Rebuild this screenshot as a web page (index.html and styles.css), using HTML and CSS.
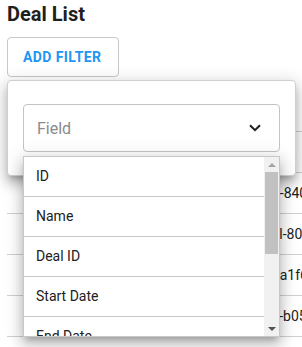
FILE: index.html
```html
<!DOCTYPE html>
<html lang="en">
<head>
    <meta charset="UTF-8">
    <meta name="viewport" content="width=device-width, initial-scale=1.0">
    <title>Deal List</title>
    <link rel="stylesheet" href="styles.css">
</head>
<body>
    <div class="page">
        <h1 class="title">Deal List</h1>
        <button class="add-filter">ADD FILTER</button>

        <table class="deals">
            <colgroup>
                <col class="col-name">
                <col class="col-id">
            </colgroup>
            <thead>
                <tr><th>Name</th><th>ID</th></tr>
            </thead>
            <tbody>
                <tr><td>Acme renewal</td><td>N/A</td></tr>
                <tr><td>Globex expansion</td><td>d7-840c2e91</td></tr>
                <tr><td>Initech pilot</td><td>5el-80b3f0c2</td></tr>
                <tr><td>Umbrella upsell</td><td>b2a1f6e0</td></tr>
                <tr><td>Hooli onboarding</td><td>4c-b05d71a8</td></tr>
            </tbody>
        </table>

        <!-- filter popover -->
        <div class="filter-popover">
            <div class="field-select">
                <span class="placeholder">Field</span>
                <svg class="chevron" width="12" height="8" viewBox="0 0 12 8">
                    <path d="M1 1.2l5 5 5-5" fill="none" stroke="#1f1f1f" stroke-width="2"/>
                </svg>
            </div>
        </div>

        <div class="field-menu">
            <ul class="menu-list">
                <li>ID</li>
                <li>Name</li>
                <li>Deal ID</li>
                <li>Start Date</li>
                <li>End Date</li>
                <li>Status</li>
                <li>Amount</li>
                <li>Created At</li>
            </ul>
            <div class="scrollbar">
                <span class="arrow up"></span>
                <span class="thumb"></span>
                <span class="track"></span>
                <span class="arrow down"></span>
            </div>
        </div>
    </div>
</body>
</html>
```

FILE: styles.css
```css
html, body {
    margin: 0;
    background: #fff;
    overflow: hidden;
}
body {
    font-family: Roboto, "Liberation Sans", sans-serif;
    color: #212121;
}
.page {
    position: relative;
    padding: 2px 7px 0;
    height: 345px;
}
.title {
    margin: 0;
    font-size: 20px;
    line-height: 24px;
    font-weight: 700;
    color: #1f1f1f;
}
.add-filter {
    display: block;
    margin-top: 11px;
    height: 40px;
    padding: 0 17px 0 15px;
    background: #fff;
    border: 1px solid #c8c8c8;
    border-radius: 4px;
    font-family: Roboto, sans-serif;
    font-size: 14px;
    font-weight: 700;
    letter-spacing: 0.4px;
    color: #2196f3;
}
.deals {
    margin-top: 8px;
    width: 600px;
    table-layout: fixed;
    border-collapse: collapse;
    font-size: 14px;
}
.col-name {
    width: 241px;
}
.deals th,
.deals td {
    padding: 0 0 0 16px;
    text-align: left;
    white-space: nowrap;
    overflow: hidden;
    border-bottom: 1px solid #d0d0d0;
}
.deals th {
    height: 46px;
    font-weight: 500;
}
.deals td {
    height: 40px;
}
.filter-popover {
    position: absolute;
    left: 7px;
    top: 80px;
    width: 257px;
    padding: 23px 15px;
    background: #fff;
    border: 1px solid #cfcfcf;
    border-radius: 4px;
    box-shadow: 0 5px 6px -3px rgba(0,0,0,0.22), 0 8px 12px 1px rgba(0,0,0,0.15), 0 3px 16px 3px rgba(0,0,0,0.13);
}
.field-select {
    display: flex;
    align-items: center;
    justify-content: space-between;
    height: 46px;
    padding: 0 18px 0 13px;
    border: 1px solid #c4c4c4;
    border-radius: 4px;
}
.placeholder {
    font-size: 16px;
    color: #8a8a8a;
}
.field-menu {
    position: absolute;
    left: 23px;
    top: 156px;
    width: 255px;
    height: 179px;
    display: flex;
    overflow: hidden;
    background: #fff;
    border: 1px solid #c8c8c8;
    box-shadow: 0 5px 6px -3px rgba(0,0,0,0.22), 0 8px 12px 1px rgba(0,0,0,0.15), 0 3px 16px 3px rgba(0,0,0,0.13);
}
.menu-list {
    flex: 1;
    margin: 0;
    padding: 0;
    list-style: none;
    overflow: hidden;
}
.menu-list li {
    height: 39px;
    line-height: 39px;
    padding-left: 12px;
    font-size: 14px;
    border-bottom: 1px solid #c8c8c8;
}
.scrollbar {
    width: 15px;
    display: flex;
    flex-direction: column;
    background: #f1f1f1;
}
.arrow {
    height: 15px;
    display: flex;
    align-items: center;
    justify-content: center;
}
.arrow::before {
    content: "";
    border-left: 4px solid transparent;
    border-right: 4px solid transparent;
}
.arrow.up::before {
    border-bottom: 4px solid #a3a3a3;
}
.arrow.down::before {
    border-top: 4px solid #505050;
}
.thumb {
    height: 82px;
    margin: 0 1px;
    background: #c1c1c1;
}
.track {
    flex: 1;
}
```
